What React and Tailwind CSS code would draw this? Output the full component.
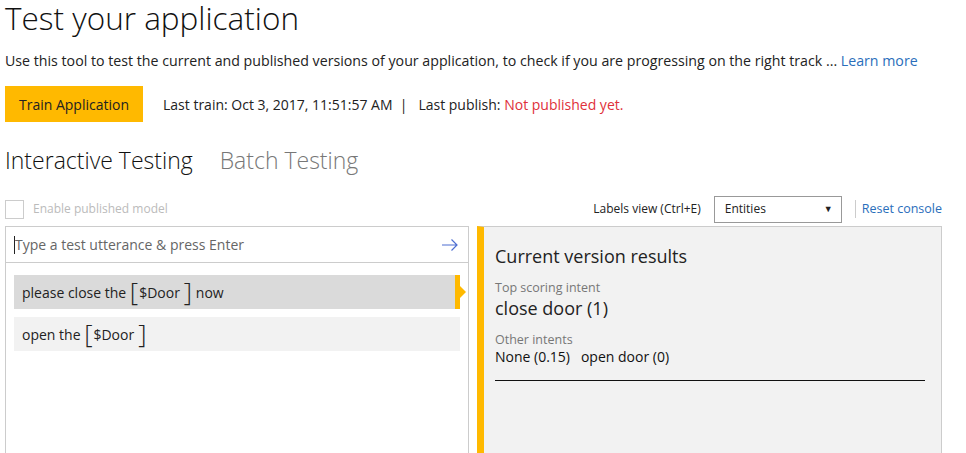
import React from 'react'

const FONT = { fontFamily: '"Segoe UI", "Open Sans", "Noto Sans", sans-serif' }

function Bracketed({ children }) {
  return (
    <span className="inline-flex items-center">
      <span className="text-[26px] font-light leading-none -mt-[3px] mr-[1px]">[</span>
      <span>{children}</span>
      <span className="text-[26px] font-light leading-none -mt-[3px] ml-[4px]">]</span>
    </span>
  )
}

export default function App() {
  return (
    <div className="w-[966px] h-[453px] overflow-hidden bg-white text-[#222] pl-[5px]" style={FONT}>
      <h1 className="text-[31.5px] font-light leading-[36px] text-[#111]">Test your application</h1>

      <p className="text-[14.2px] mt-[15px] leading-[20px] text-[#222] whitespace-nowrap">
        Use this tool to test the current and published versions of your application, to check if you are progressing on the right track ...{' '}
        <span className="text-[#2a6ebb]">Learn more</span>
      </p>

      {/* 训练按钮 + 状态 */}
      <div className="flex items-center mt-[15px] h-[36px]">
        <button className="h-[36px] w-[138px] bg-[#ffb900] text-[14px] text-[#222]">Train Application</button>
        <span className="ml-[20px] text-[14px]">
          Last train: Oct 3, 2017, 11:51:57 AM &nbsp;|&nbsp;&nbsp; Last publish: <span className="text-[#e0303a]">Not published yet.</span>
        </span>
      </div>

      {/* tabs */}
      <div className="flex items-center gap-[27px] mt-[23px] h-[30px] text-[23px] font-light">
        <span className="text-[#111]">Interactive Testing</span>
        <span className="text-[#777]">Batch Testing</span>
      </div>

      {/* 控制行 */}
      <div className="w-[937px] flex items-center mt-[20px] h-[28px]">
        <div className="w-[19px] h-[19px] border border-[#ccc] bg-white" />
        <span className="ml-[9px] text-[12px] text-[#bbb]">Enable published model</span>
        <div className="flex-1" />
        <span className="text-[12px] text-[#222]">Labels view (Ctrl+E)</span>
        <div className="ml-[13px] w-[128px] h-[27px] border border-[#999] flex items-center justify-between pl-[10px] pr-[8px] text-[12px]">
          <span>Entities</span>
          <span className="text-[9px]">▼</span>
        </div>
        <div className="ml-[13px] w-px h-[18px] bg-[#ccc]" />
        <span className="ml-[6px] text-[12.5px] text-[#2a6ebb]">Reset console</span>
      </div>

      {/* panels */}
      <div className="flex gap-[8px] mt-[3px]">
        <div className="w-[464px] h-[240px] border border-[#ccc] bg-white">
          <div className="h-[36px] border-b border-[#ccc] flex items-center pl-[8px] pr-[10px]">
            <span className="w-px h-[18px] bg-[#222]" />
            <span className="flex-1 text-[14px] text-[#666]">Type a test utterance &amp; press Enter</span>
            <svg width="16" height="12" viewBox="0 0 16 12" fill="none" stroke="#4f6fd1" strokeWidth="1.2">
              <path d="M0 6h15M9.5 0.5L15 6l-5.5 5.5" />
            </svg>
          </div>
          <div className="pl-[8px] pt-[12px] flex flex-col gap-[8px]">
            <div className="flex items-stretch h-[34px]">
              <div className="w-[441px] bg-[#dadada] flex items-center pl-[8px] text-[14px] text-[#222]">
                <span>please close the&nbsp;</span>
                <Bracketed>$Door</Bracketed>
                <span>&nbsp;now</span>
              </div>
              <div className="w-[5px] bg-[#ffb900]" />
              <div className="w-0 h-0 self-center border-y-[6px] border-y-transparent border-l-[6px] border-l-[#ffb900]" />
            </div>
            <div className="w-[446px] h-[34px] bg-[#f2f2f2] flex items-center pl-[8px] text-[14px] text-[#222]">
              <span>open the&nbsp;</span>
              <Bracketed>$Door</Bracketed>
            </div>
          </div>
        </div>

        <div className="w-[465px] h-[240px] border border-[#ccc] border-l-[7px] border-l-[#ffb900] bg-[#f2f2f2] pl-[11px] pr-[16px]">
          <div className="text-[18px] text-[#222] mt-[17px] leading-[24px]">Current version results</div>
          <div className="text-[12.5px] text-[#777] mt-[12px] leading-[16px]">Top scoring intent</div>
          <div className="text-[18px] text-[#222] leading-[24px]">close door (1)</div>
          <div className="text-[12.5px] text-[#777] mt-[12px] leading-[16px]">Other intents</div>
          <div className="text-[14px] text-[#111] leading-[18px]">None (0.15)&nbsp;&nbsp; open door (0)</div>
          <div className="h-px bg-[#111] mt-[14px]" />
        </div>
      </div>
    </div>
  )
}
